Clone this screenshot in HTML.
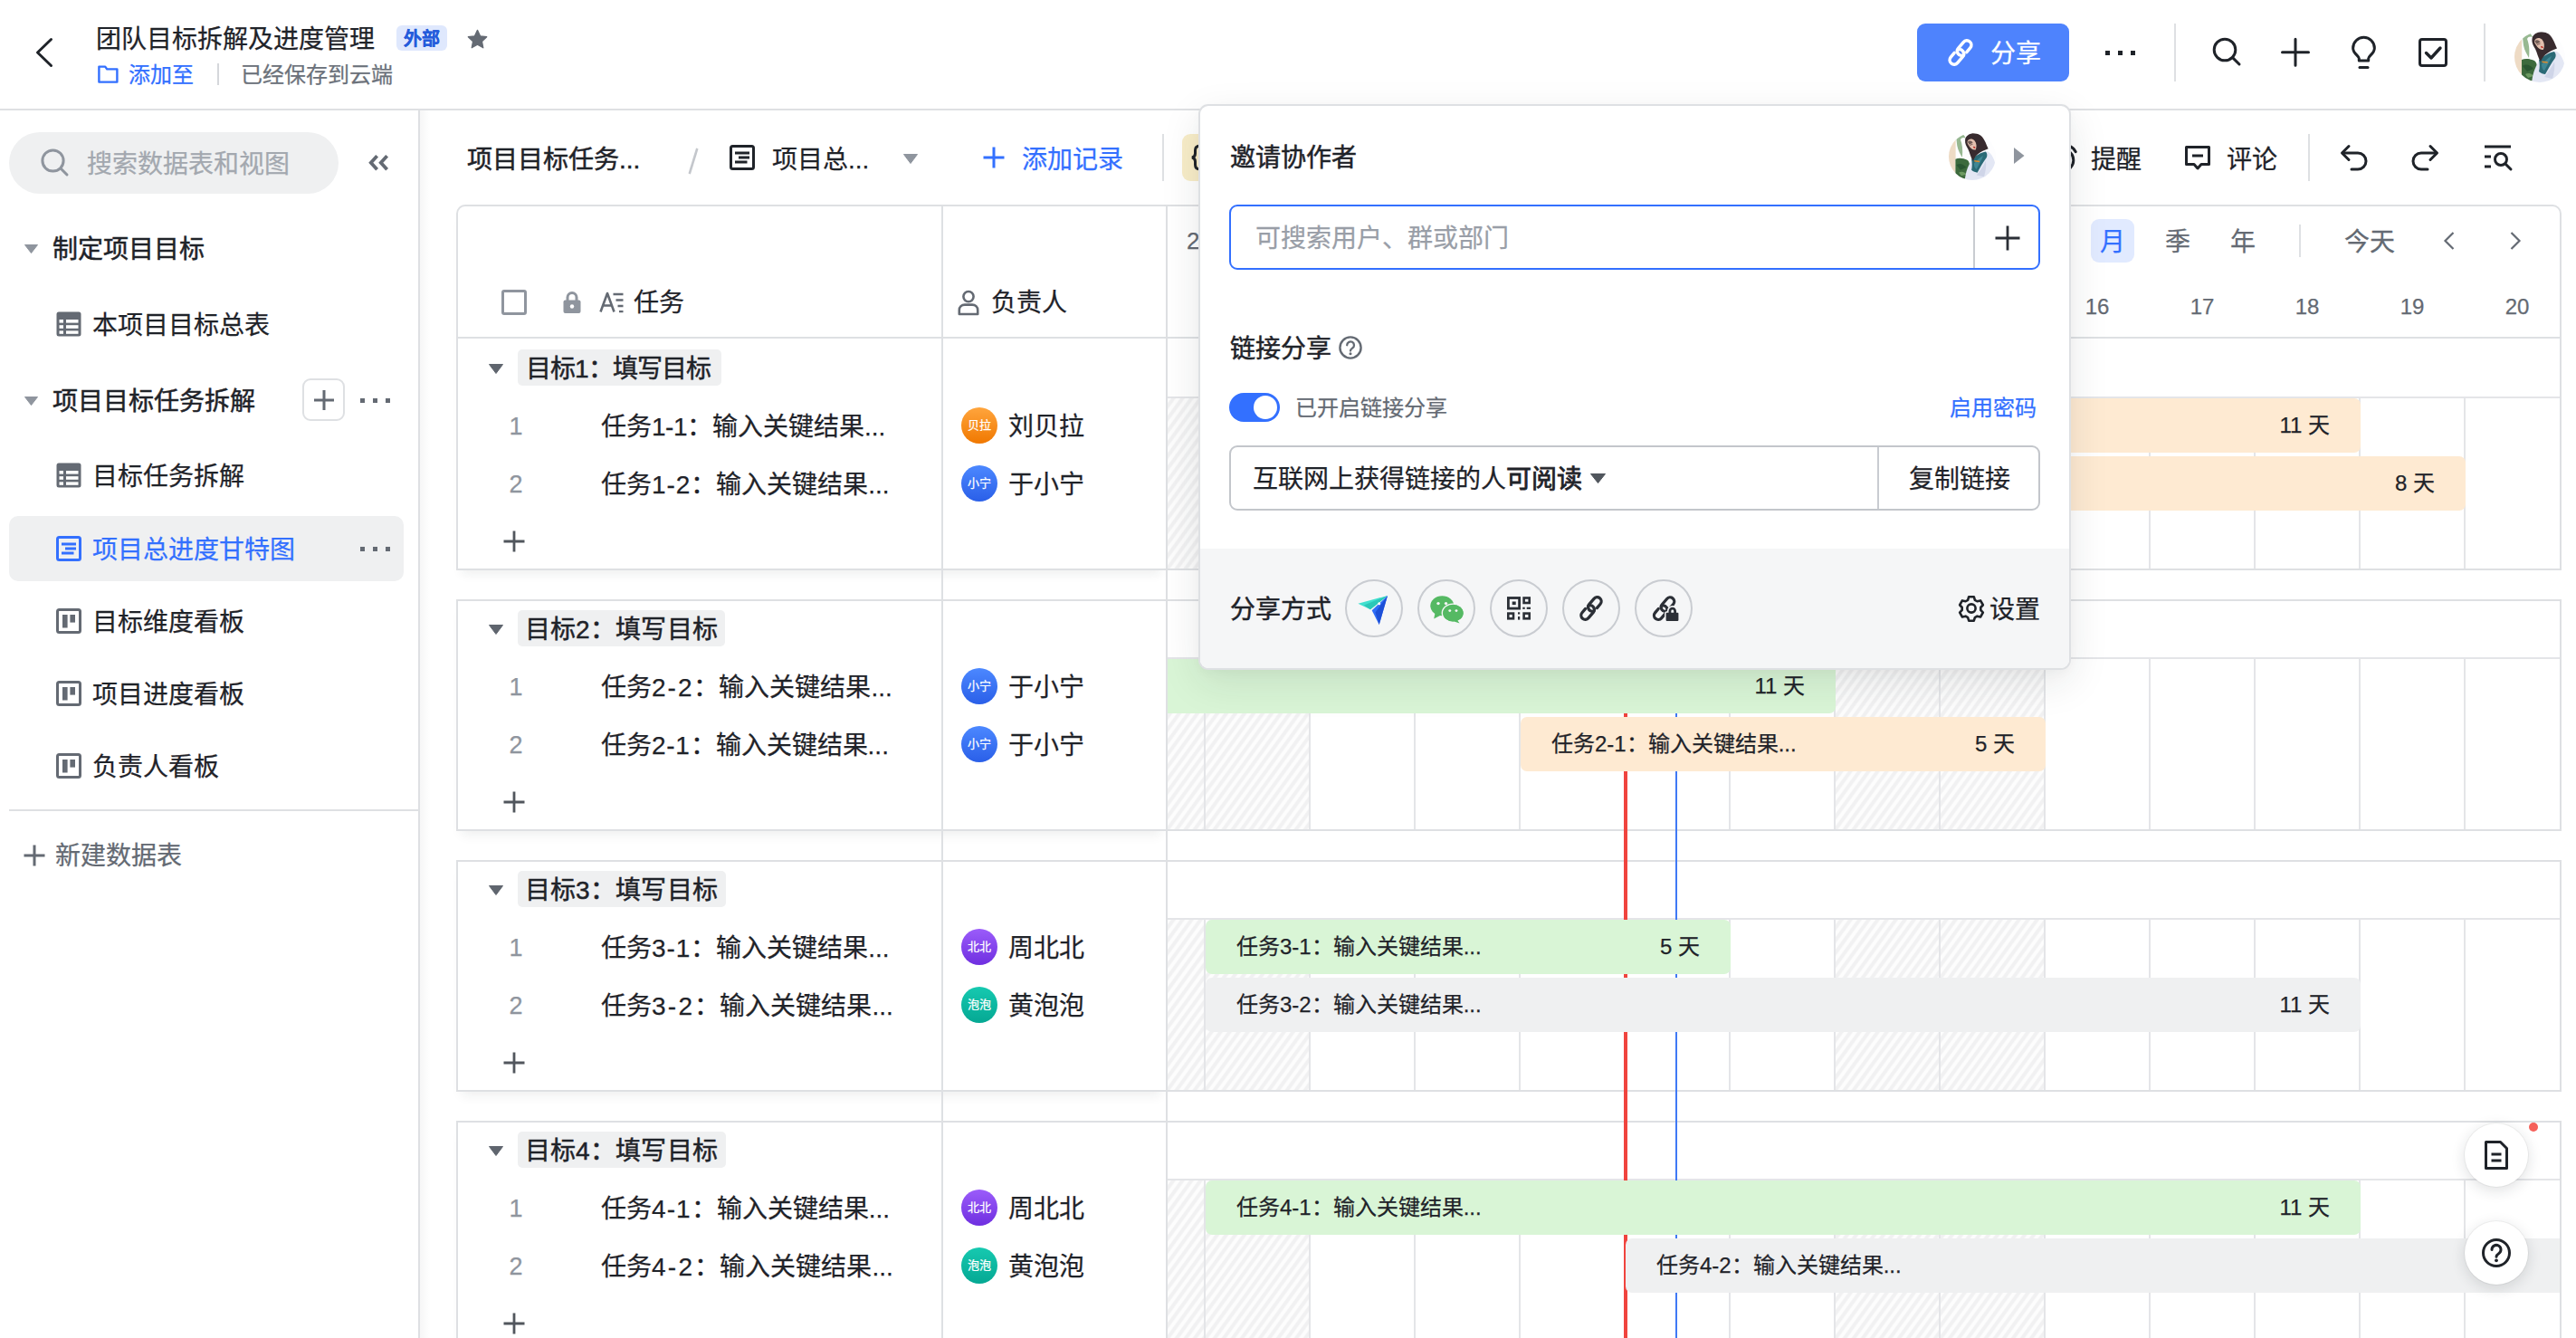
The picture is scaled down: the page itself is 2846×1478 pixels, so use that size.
<!DOCTYPE html>
<html lang="zh-CN"><head><meta charset="utf-8"><title>团队目标拆解及进度管理</title>
<style>
html,body{margin:0;padding:0;background:#fff;}
body{width:2846px;height:1478px;overflow:hidden;position:relative;font-family:"Liberation Sans",sans-serif;color:#1f2329;}
.t{position:absolute;white-space:nowrap;overflow:visible;-webkit-text-stroke:0.25px;}
.r{position:absolute;box-sizing:border-box;}
.clip{position:absolute;overflow:hidden;}
.hatch{background:repeating-linear-gradient(126deg,#fdfdfd 0px,#fdfdfd 2.4px,#f1f1f2 3.9px,#f1f1f2 6.4px,#fdfdfd 8.1px);}
</style></head><body>
<svg width="0" height="0" style="position:absolute"><defs>
<clipPath id="avc"><circle cx="28" cy="28" r="28"/></clipPath>
<filter id="avb" x="-10%" y="-10%" width="120%" height="120%"><feGaussianBlur stdDeviation="0.55"/></filter>
<symbol id="avatar" viewBox="0 0 56 56"><g clip-path="url(#avc)"><rect width="56" height="56" fill="#fdfdfe"/>
<g filter="url(#avb)">
<rect x="-2" y="-2" width="10.2" height="60" fill="#eedbc5"/>
<path d="M8.5 2 C12 -1 18 0 20 6 C18 5 15 5 14 8 C16 13 17 20 16 29 C14 25 11 21 10 15 C9.5 11 9 6 8.5 2 Z" fill="#7da676" opacity=".8"/>
<path d="M8 31 C12 29 18 30 22 32 C25 34 26 40 24 46 L22 55 L8 53 Z" fill="#3c6b3c"/>
<path d="M9 38 C13 35 18 37 21 41 L14 44 Z" fill="#2c5630"/>
<path d="M12 47 C15 45 19 46 21 49 L15 51 Z" fill="#6d9a62"/>
<path d="M52 40 L57 41 L57 47 L52 46 Z" fill="#4f8a45"/>
<path d="M19 57 C20 45 24 37 28 31 C33 25 41 21 47 22 C53 26 56 36 57 46 L57 58 Z" fill="#e3e7f4"/>
<path d="M33 50 C37 45 41 40 44 33 C45 38 44 45 42 52 Z" fill="#cfd5e8"/>
<path d="M27 31 C32 27 38 23 44 22 C46 24 46 27 45 29 C41 34 37 42 34 47 C32 47 29 46 27 44 C28 40 28 35 27 31 Z" fill="#2c6a76"/>
<path d="M30 36 C33 33 37 29 41 27 C39 32 36 38 33 43 C31 42 30 39 30 36 Z" fill="#3f8794"/>
<path d="M30.5 32.4 L36.8 33.2 L36.6 34.8 L30.4 34 Z" fill="#e08b2c"/>
<path d="M19.5 8 C20 1.5 29 -1.5 36 1.5 C42 4.5 44 12 47 18.5 C43 20 38 22 34 25.5 C31 28 30 31 29 33 C26 29 25 23 23 19 C21 15.5 19 12.5 19.5 8 Z" fill="#392c2e"/>
<path d="M22.2 10 C23.6 6.4 28 6.2 30.6 8.8 C33.2 12 33.6 16 32 19.8 C29 20.8 26 18.2 24 15 C23 13.4 21.7 12 22.2 10 Z" fill="#e3bfae"/>
<path d="M22.4 10.6 C24.5 8.2 27.4 9.2 28.6 11.6 L24.5 13.8 Z" fill="#4a3a3a" opacity=".75"/>
<path d="M25 14.5 L28.5 13.2" stroke="#5a4040" stroke-width=".8"/>
<ellipse cx="30.4" cy="17" rx="1.4" ry=".9" fill="#c02a22" transform="rotate(30 30.4 17)"/>
</g></g></symbol>
</defs></svg>
<div class="r" style="left:0px;top:120px;width:2846px;height:2px;background:#dee0e3;"></div>
<svg class="r" style="left:36px;top:38px;" width="26" height="40" viewBox="0 0 26 40" fill="none"><path d="M20.5 5.5 L5.5 20 L20.5 34.5" stroke="#1f2329" stroke-width="3" stroke-linecap="round" stroke-linejoin="round"/></svg>
<div class="t" style="left:106px;top:23.0px;line-height:42px;height:42px;font-size:28px;color:#1f2329;">团队目标拆解及进度管理</div>
<div class="r" style="left:438px;top:28px;width:56px;height:28px;background:#dfe8fd;border-radius:6px;"></div>
<div class="t" style="left:438px;top:28.5px;line-height:28px;height:28px;font-size:20px;color:#245bdb;font-weight:700;width:56px;text-align:center;">外部</div>
<svg class="r" style="left:515px;top:31px;" width="25" height="25" viewBox="0 0 24 24" fill="none"><path d="M12 2.2l2.95 6.3 6.85.85-5.05 4.75 1.3 6.8L12 17.55 5.95 20.9l1.3-6.8L2.2 9.35l6.85-.85z" fill="#646a73" stroke="#646a73" stroke-width="1.2" stroke-linejoin="round"/></svg>
<svg class="r" style="left:107px;top:70px;" width="26" height="24" viewBox="0 0 26 24" fill="none"><path d="M2.4 3.6 H9.2 L11.2 6.4 H22.4 V20.6 H2.4 Z" stroke="#3370ff" stroke-width="2.4" stroke-linejoin="round"/></svg>
<div class="t" style="left:142px;top:64.5px;line-height:36px;height:36px;font-size:24px;color:#3370ff;">添加至</div>
<div class="r" style="left:240px;top:70px;width:2px;height:24px;background:#d5d7db;"></div>
<div class="t" style="left:265.5px;top:64.5px;line-height:36px;height:36px;font-size:24px;color:#6b717a;">已经保存到云端</div>
<div class="r" style="left:2118px;top:26px;width:168px;height:64px;background:#4e83fd;border-radius:9px;"></div>
<svg class="r" style="left:2141.5px;top:33.6px" width="48" height="48" viewBox="-24 -24 48 48" fill="none"><g transform="translate(0,0) rotate(-49.6) scale(1.07)" stroke="#fff" stroke-width="3.27" stroke-linecap="round" fill="none"><path d="M 4.4 4.6 L 10.1 4.6 A 4.6 4.6 0 0 0 10.1 -4.6 L 1.8 -4.6 A 4.6 4.6 0 0 0 -0.5 3.98"/><path d="M 4.4 4.6 L 10.1 4.6 A 4.6 4.6 0 0 0 10.1 -4.6 L 1.8 -4.6 A 4.6 4.6 0 0 0 -0.5 3.98" transform="rotate(180)"/></g></svg>
<div class="t" style="left:2199px;top:38.5px;line-height:42px;height:42px;font-size:28px;color:#fff;">分享</div>
<div class="r" style="left:2326px;top:55.5px;width:5px;height:5.5px;background:#1f2329;"></div>
<div class="r" style="left:2340px;top:55.5px;width:5px;height:5.5px;background:#1f2329;"></div>
<div class="r" style="left:2354px;top:55.5px;width:5px;height:5.5px;background:#1f2329;"></div>
<div class="r" style="left:2402px;top:26px;width:2px;height:64px;background:#dee0e3;"></div>
<svg class="r" style="left:2442px;top:39px;" width="36" height="36" viewBox="0 0 36 36" fill="none"><circle cx="16" cy="16" r="11.8" stroke="#1f2329" stroke-width="3"/><path d="M24.6 24.6 L32 32" stroke="#1f2329" stroke-width="3" stroke-linecap="round"/></svg>
<svg class="r" style="left:2518px;top:40px;" width="36" height="36" viewBox="0 0 36 36" fill="none"><path d="M18 3.3 V32.2 M3.5 17.75 H32.5" stroke="#1f2329" stroke-width="3" stroke-linecap="round"/></svg>
<svg class="r" style="left:2594px;top:36px;" width="36" height="42" viewBox="0 0 36 42" fill="none"><path d="M12.3 31 V28.6 C12.3 25.6 5.65 23.2 5.65 17.15 A11.85 11.85 0 0 1 29.35 17.15 C29.35 23.2 22.7 25.6 22.7 28.6 V31 Z" stroke="#1f2329" stroke-width="3" stroke-linejoin="round"/><path d="M13 38.4 H22" stroke="#1f2329" stroke-width="3" stroke-linecap="round"/></svg>
<svg class="r" style="left:2670px;top:40px;" width="36" height="36" viewBox="0 0 36 36" fill="none"><rect x="3.5" y="3.5" width="29" height="29" rx="2.5" stroke="#1f2329" stroke-width="3"/><path d="M10.5 18.5 L16 24 L26 13" stroke="#1f2329" stroke-width="3.4" stroke-linecap="round" stroke-linejoin="round"/></svg>
<div class="r" style="left:2744px;top:26px;width:2px;height:64px;background:#dee0e3;"></div>
<svg class="r" style="left:2778px;top:35px" width="56" height="56"><use href="#avatar"/></svg>
<div class="r" style="left:462px;top:122px;width:2px;height:1356px;background:#dee0e3;"></div>
<div class="r" style="left:464px;top:122px;width:12px;height:1356px;background:linear-gradient(90deg,rgba(31,35,41,0.04),rgba(31,35,41,0));"></div>
<div class="r" style="left:10px;top:146px;width:364px;height:68px;background:#eff0f1;border-radius:34px;"></div>
<svg class="r" style="left:43px;top:162px;" width="36" height="36" viewBox="0 0 36 36" fill="none"><circle cx="15.5" cy="15.5" r="11.6" stroke="#8f959e" stroke-width="3"/><path d="M24 24 L31 31" stroke="#8f959e" stroke-width="3" stroke-linecap="round"/></svg>
<div class="t" style="left:96px;top:161.0px;line-height:42px;height:42px;font-size:28px;color:#a3a8af;">搜索数据表和视图</div>
<svg class="r" style="left:405px;top:168px;" width="28" height="24" viewBox="0 0 28 24" fill="none"><path d="M11.6 4.2 L4.8 11.7 L11.6 19.2 M22.6 4.2 L15.8 11.7 L22.6 19.2" stroke="#646a73" stroke-width="3.8" stroke-linejoin="miter" fill="none"/></svg>
<svg class="r" style="left:27px;top:270px;" width="15" height="10" viewBox="0 0 15 10" fill="none"><path d="M0.5 0.5 H14.5 L7.5 9.5 Z" fill="#8f959e" stroke="#8f959e" stroke-linejoin="round" stroke-width="1"/></svg>
<div class="t" style="left:58px;top:255.0px;line-height:42px;height:42px;font-size:28px;color:#1f2329;-webkit-text-stroke:0.5px;">制定项目目标</div>
<svg class="r" style="left:62px;top:344px;" width="28" height="28" viewBox="0 0 28 28" fill="none"><rect x="0.5" y="0.5" width="27" height="27" rx="2.5" fill="#646a73"/><g fill="#fff"><rect x="3.5" y="9" width="4.5" height="3.6"/><rect x="11" y="9" width="13.5" height="3.6"/><rect x="3.5" y="15.2" width="4.5" height="3.6"/><rect x="11" y="15.2" width="13.5" height="3.6"/><rect x="3.5" y="21.4" width="4.5" height="3.4"/><rect x="11" y="21.4" width="13.5" height="3.4"/></g></svg>
<div class="t" style="left:102px;top:339.0px;line-height:42px;height:42px;font-size:28px;color:#1f2329;">本项目目标总表</div>
<svg class="r" style="left:27px;top:438px;" width="15" height="10" viewBox="0 0 15 10" fill="none"><path d="M0.5 0.5 H14.5 L7.5 9.5 Z" fill="#8f959e" stroke="#8f959e" stroke-linejoin="round" stroke-width="1"/></svg>
<div class="t" style="left:58px;top:423.0px;line-height:42px;height:42px;font-size:28px;color:#1f2329;-webkit-text-stroke:0.5px;">项目目标任务拆解</div>
<div class="r" style="left:334px;top:418px;width:47px;height:47px;background:#fff;border:2px solid #dee0e3;border-radius:9px;"></div>
<svg class="r" style="left:345px;top:429px;" width="26" height="26" viewBox="0 0 26 26" fill="none"><path d="M13 2 V24 M2 13 H24" stroke="#646a73" stroke-width="3"/></svg>
<div class="r" style="left:398px;top:439.5px;width:5px;height:5px;background:#646a73;"></div>
<div class="r" style="left:412px;top:439.5px;width:5px;height:5px;background:#646a73;"></div>
<div class="r" style="left:426px;top:439.5px;width:5px;height:5px;background:#646a73;"></div>
<svg class="r" style="left:62px;top:511px;" width="28" height="28" viewBox="0 0 28 28" fill="none"><rect x="0.5" y="0.5" width="27" height="27" rx="2.5" fill="#646a73"/><g fill="#fff"><rect x="3.5" y="9" width="4.5" height="3.6"/><rect x="11" y="9" width="13.5" height="3.6"/><rect x="3.5" y="15.2" width="4.5" height="3.6"/><rect x="11" y="15.2" width="13.5" height="3.6"/><rect x="3.5" y="21.4" width="4.5" height="3.4"/><rect x="11" y="21.4" width="13.5" height="3.4"/></g></svg>
<div class="t" style="left:102px;top:506.0px;line-height:42px;height:42px;font-size:28px;color:#1f2329;">目标任务拆解</div>
<div class="r" style="left:10px;top:570px;width:436px;height:72px;background:#eff0f1;border-radius:10px;"></div>
<svg class="r" style="left:62px;top:592px;" width="28" height="28" viewBox="0 0 28 28" fill="none"><rect x="1.5" y="1.5" width="25" height="25" rx="2" stroke="#3370ff" stroke-width="3"/><path d="M6 9 H22 M10 14 H22 M6 19 H19.5" stroke="#3370ff" stroke-width="3"/></svg>
<div class="t" style="left:102px;top:587.0px;line-height:42px;height:42px;font-size:28px;color:#3370ff;">项目总进度甘特图</div>
<div class="r" style="left:398px;top:603.5px;width:5px;height:5px;background:#646a73;"></div>
<div class="r" style="left:412px;top:603.5px;width:5px;height:5px;background:#646a73;"></div>
<div class="r" style="left:426px;top:603.5px;width:5px;height:5px;background:#646a73;"></div>
<svg class="r" style="left:62px;top:672px;" width="28" height="28" viewBox="0 0 28 28" fill="none"><rect x="1.5" y="1.5" width="25" height="25" rx="2" stroke="#646a73" stroke-width="3"/><rect x="7" y="7" width="5.6" height="14.5" fill="#646a73"/><rect x="15.4" y="7" width="5.6" height="8.6" fill="#646a73"/></svg>
<div class="t" style="left:102px;top:667.0px;line-height:42px;height:42px;font-size:28px;color:#1f2329;">目标维度看板</div>
<svg class="r" style="left:62px;top:752px;" width="28" height="28" viewBox="0 0 28 28" fill="none"><rect x="1.5" y="1.5" width="25" height="25" rx="2" stroke="#646a73" stroke-width="3"/><rect x="7" y="7" width="5.6" height="14.5" fill="#646a73"/><rect x="15.4" y="7" width="5.6" height="8.6" fill="#646a73"/></svg>
<div class="t" style="left:102px;top:747.0px;line-height:42px;height:42px;font-size:28px;color:#1f2329;">项目进度看板</div>
<svg class="r" style="left:62px;top:832px;" width="28" height="28" viewBox="0 0 28 28" fill="none"><rect x="1.5" y="1.5" width="25" height="25" rx="2" stroke="#646a73" stroke-width="3"/><rect x="7" y="7" width="5.6" height="14.5" fill="#646a73"/><rect x="15.4" y="7" width="5.6" height="8.6" fill="#646a73"/></svg>
<div class="t" style="left:102px;top:827.0px;line-height:42px;height:42px;font-size:28px;color:#1f2329;">负责人看板</div>
<div class="r" style="left:10px;top:894px;width:452px;height:2px;background:#dee0e3;"></div>
<svg class="r" style="left:25px;top:932px;" width="26" height="26" viewBox="0 0 26 26" fill="none"><path d="M13 1.5 V24.5 M1.5 13 H24.5" stroke="#646a73" stroke-width="3"/></svg>
<div class="t" style="left:61px;top:925.0px;line-height:42px;height:42px;font-size:28px;color:#646a73;">新建数据表</div>
<div class="t" style="left:516px;top:155.5px;line-height:42px;height:42px;font-size:28px;color:#1f2329;-webkit-text-stroke:0.5px;">项目目标任务...</div>
<svg class="r" style="left:758px;top:162px;" width="16" height="32" viewBox="0 0 16 32" fill="none"><path d="M12.3 2 L3.7 30" stroke="#c4c7cc" stroke-width="2.6"/></svg>
<svg class="r" style="left:806px;top:160px;" width="28" height="28" viewBox="0 0 28 28" fill="none"><rect x="1.5" y="1.5" width="25" height="25" rx="2" stroke="#1f2329" stroke-width="3"/><path d="M6 9 H22 M10 14 H22 M6 19 H19.5" stroke="#1f2329" stroke-width="3"/></svg>
<div class="t" style="left:853px;top:155.5px;line-height:42px;height:42px;font-size:28px;color:#1f2329;">项目总...</div>
<svg class="r" style="left:998px;top:170px;" width="16" height="11" viewBox="0 0 16 11" fill="none"><path d="M0.5 0.5 H15.5 L8.0 10.5 Z" fill="#8f959e" stroke="#8f959e" stroke-linejoin="round" stroke-width="1"/></svg>
<svg class="r" style="left:1084px;top:160px;" width="28" height="28" viewBox="0 0 28 28" fill="none"><path d="M14 2.5 V25.5 M2.5 14 H25.5" stroke="#3370ff" stroke-width="3"/></svg>
<div class="t" style="left:1129px;top:155.5px;line-height:42px;height:42px;font-size:28px;color:#3370ff;">添加记录</div>
<div class="r" style="left:1284px;top:148px;width:2px;height:52px;background:#dee0e3;"></div>
<div class="r" style="left:1306px;top:148px;width:60px;height:52px;background:#f8edc8;border-radius:9px;"></div>
<svg class="r" style="left:1314px;top:158px;" width="20" height="32" viewBox="0 0 20 32" fill="none"><path d="M12 3 C8 3 6.5 5 6.5 8 V11.5 C6.5 14 5 15.5 3 16 C5 16.5 6.5 18 6.5 20.5 V24 C6.5 27 8 29 12 29" stroke="#1f2329" stroke-width="3" fill="none" stroke-linecap="round"/></svg>
<svg class="r" style="left:2262px;top:158px;" width="34" height="34" viewBox="0 0 34 34" fill="none"><circle cx="17" cy="19" r="11.8" stroke="#1f2329" stroke-width="3"/><path d="M23.5 3.2 C27 4.2 29.8 6.6 31.2 9.6" stroke="#1f2329" stroke-width="3" stroke-linecap="round"/></svg>
<div class="t" style="left:2310px;top:155.5px;line-height:42px;height:42px;font-size:28px;color:#1f2329;">提醒</div>
<svg class="r" style="left:2412px;top:159px;" width="32" height="32" viewBox="0 0 32 32" fill="none"><path d="M3.5 3.5 H28.5 V22.5 H20 L16 27 L12 22.5 H3.5 Z" stroke="#1f2329" stroke-width="3" stroke-linejoin="round"/><path d="M10 13 H22" stroke="#1f2329" stroke-width="3"/></svg>
<div class="t" style="left:2460px;top:155.5px;line-height:42px;height:42px;font-size:28px;color:#1f2329;">评论</div>
<div class="r" style="left:2550px;top:148px;width:2px;height:52px;background:#dee0e3;"></div>
<svg class="r" style="left:2584px;top:158px;" width="34" height="32" viewBox="0 0 34 32" fill="none"><path d="M11 3.5 L3.5 11 L11 18.5" stroke="#1f2329" stroke-width="3" stroke-linecap="round" stroke-linejoin="round"/><path d="M4.5 11 H21 A9 9 0 0 1 21 29 H14" stroke="#1f2329" stroke-width="3" stroke-linecap="round"/></svg>
<svg class="r" style="left:2662px;top:158px;" width="34" height="32" viewBox="0 0 34 32" fill="none"><path d="M23 3.5 L30.5 11 L23 18.5" stroke="#1f2329" stroke-width="3" stroke-linecap="round" stroke-linejoin="round"/><path d="M29.5 11 H13 A9 9 0 0 0 13 29 H20" stroke="#1f2329" stroke-width="3" stroke-linecap="round"/></svg>
<svg class="r" style="left:2743px;top:158px;" width="34" height="32" viewBox="0 0 34 32" fill="none"><path d="M2 4 H31 M2 15 H9 M2 26 H9" stroke="#1f2329" stroke-width="3"/><circle cx="20" cy="18" r="6.5" stroke="#1f2329" stroke-width="3"/><path d="M25 23 L31 29" stroke="#1f2329" stroke-width="3" stroke-linecap="round"/></svg>
<div class="r" style="left:504px;top:228px;width:784px;height:402px;background:#fff;box-shadow:0 10px 12px -6px rgba(31,35,41,0.075);border-radius:10px 0 0 0;"></div>
<div class="r" style="left:504px;top:662px;width:784px;height:256px;background:#fff;box-shadow:0 10px 12px -6px rgba(31,35,41,0.075);"></div>
<div class="r" style="left:504px;top:950px;width:784px;height:256px;background:#fff;box-shadow:0 10px 12px -6px rgba(31,35,41,0.075);"></div>
<div class="r" style="left:504px;top:1238px;width:784px;height:256px;background:#fff;box-shadow:0 10px 12px -6px rgba(31,35,41,0.075);"></div>
<div class="r" style="left:504px;top:226px;width:2326px;height:404px;background:transparent;border:2px solid #dee0e3;border-radius:10px 10px 0 0;"></div>
<div class="r" style="left:506px;top:372px;width:2322px;height:2px;background:#dee0e3;"></div>
<div class="r" style="left:504px;top:662px;width:2326px;height:256px;background:transparent;border:2px solid #dee0e3;"></div>
<div class="r" style="left:504px;top:950px;width:2326px;height:256px;background:transparent;border:2px solid #dee0e3;"></div>
<div class="r" style="left:504px;top:1238px;width:2326px;height:256px;background:transparent;border:2px solid #dee0e3;"></div>
<div class="r" style="left:1040px;top:228px;width:2px;height:1250px;background:#dee0e3;"></div>
<div class="r" style="left:1288px;top:228px;width:2px;height:1250px;background:#dee0e3;"></div>
<div class="r" style="left:554px;top:320px;width:28px;height:28px;background:#fff;border:3px solid #8f959e;border-radius:3px;"></div>
<svg class="r" style="left:621px;top:321px;" width="22" height="26" viewBox="0 0 22 26" fill="none"><path d="M6 11 V7.5 a5 5 0 0 1 10 0 V11" stroke="#8f959e" stroke-width="3" fill="none"/><rect x="1.5" y="10.5" width="19" height="14.5" rx="2" fill="#8f959e"/><circle cx="11" cy="17.5" r="2.2" fill="#fff"/></svg>
<svg class="r" style="left:661px;top:321px;" width="30" height="26" viewBox="0 0 30 26" fill="none"><path d="M2.5 23.5 L10 3 L17.5 23.5 M5 16.5 H15" stroke="#646a73" stroke-width="2.6" fill="none" stroke-linejoin="round"/><path d="M16.5 4 H27.5 M19.5 10.5 H27.5 M21.5 17 H27.5 M23 23.2 H27.5" stroke="#646a73" stroke-width="2.3"/></svg>
<div class="t" style="left:700px;top:314.0px;line-height:42px;height:42px;font-size:28px;color:#1f2329;">任务</div>
<svg class="r" style="left:1056px;top:319px;" width="28" height="30" viewBox="0 0 28 30" fill="none"><circle cx="14" cy="8.6" r="5.6" stroke="#646a73" stroke-width="2.6"/><path d="M3.8 28 V23.5 C3.8 20 6.5 17.6 10 17.6 H18 C21.5 17.6 24.2 20 24.2 23.5 V28 Z" stroke="#646a73" stroke-width="2.6" stroke-linejoin="round"/></svg>
<div class="t" style="left:1095px;top:314.0px;line-height:42px;height:42px;font-size:28px;color:#1f2329;">负责人</div>
<svg class="r" style="left:540px;top:402px;" width="16" height="11" viewBox="0 0 16 11" fill="none"><path d="M0.5 0.5 H15.5 L8.0 10.5 Z" fill="#5f656e" stroke="#5f656e" stroke-linejoin="round" stroke-width="1"/></svg>
<div class="r" style="left:572px;top:386px;width:225px;height:40px;background:#eff0f1;border-radius:5px;"></div>
<div class="t" style="left:580.5px;top:386.5px;line-height:42px;height:42px;font-size:28px;color:#1f2329;-webkit-text-stroke:0.5px;letter-spacing:-0.8px;">目标1：填写目标</div>
<div class="t" style="left:552px;top:451.0px;line-height:40px;height:40px;font-size:27px;color:#8f959e;width:36px;text-align:center;">1</div>
<div class="t" style="left:664px;top:450.5px;line-height:42px;height:42px;font-size:28px;color:#1f2329;">任务<span style="letter-spacing:-0.5px;">1-1</span>：输入关键结果...</div>
<div class="r" style="left:1062px;top:450px;width:40px;height:40px;background:linear-gradient(180deg,#ffa53d,#f07800);border-radius:50%;"></div>
<div class="t" style="left:1062px;top:460.0px;line-height:20px;height:20px;font-size:13px;color:#fff;width:40px;text-align:center;">贝拉</div>
<div class="t" style="left:1114px;top:450.5px;line-height:42px;height:42px;font-size:28px;color:#1f2329;">刘贝拉</div>
<div class="t" style="left:552px;top:515.0px;line-height:40px;height:40px;font-size:27px;color:#8f959e;width:36px;text-align:center;">2</div>
<div class="t" style="left:664px;top:514.5px;line-height:42px;height:42px;font-size:28px;color:#1f2329;">任务<span style="letter-spacing:0.9px;">1-2</span>：输入关键结果...</div>
<div class="r" style="left:1062px;top:514px;width:40px;height:40px;background:linear-gradient(180deg,#4c88ff,#2a5fe8);border-radius:50%;"></div>
<div class="t" style="left:1062px;top:524.0px;line-height:20px;height:20px;font-size:13px;color:#fff;width:40px;text-align:center;">小宁</div>
<div class="t" style="left:1114px;top:514.5px;line-height:42px;height:42px;font-size:28px;color:#1f2329;">于小宁</div>
<svg class="r" style="left:555px;top:585px;" width="26" height="26" viewBox="0 0 26 26" fill="none"><path d="M13 1.5 V24.5 M1.5 13 H24.5" stroke="#51565d" stroke-width="2.8"/></svg>
<svg class="r" style="left:540px;top:690px;" width="16" height="11" viewBox="0 0 16 11" fill="none"><path d="M0.5 0.5 H15.5 L8.0 10.5 Z" fill="#5f656e" stroke="#5f656e" stroke-linejoin="round" stroke-width="1"/></svg>
<div class="r" style="left:572px;top:674px;width:229px;height:40px;background:#eff0f1;border-radius:5px;"></div>
<div class="t" style="left:579.5px;top:674.5px;line-height:42px;height:42px;font-size:28px;color:#1f2329;-webkit-text-stroke:0.5px;letter-spacing:0.25px;">目标2：填写目标</div>
<div class="t" style="left:552px;top:739.0px;line-height:40px;height:40px;font-size:27px;color:#8f959e;width:36px;text-align:center;">1</div>
<div class="t" style="left:664px;top:738.5px;line-height:42px;height:42px;font-size:28px;color:#1f2329;">任务<span style="letter-spacing:2.0px;">2-2</span>：输入关键结果...</div>
<div class="r" style="left:1062px;top:738px;width:40px;height:40px;background:linear-gradient(180deg,#4c88ff,#2a5fe8);border-radius:50%;"></div>
<div class="t" style="left:1062px;top:748.0px;line-height:20px;height:20px;font-size:13px;color:#fff;width:40px;text-align:center;">小宁</div>
<div class="t" style="left:1114px;top:738.5px;line-height:42px;height:42px;font-size:28px;color:#1f2329;">于小宁</div>
<div class="t" style="left:552px;top:803.0px;line-height:40px;height:40px;font-size:27px;color:#8f959e;width:36px;text-align:center;">2</div>
<div class="t" style="left:664px;top:802.5px;line-height:42px;height:42px;font-size:28px;color:#1f2329;">任务<span style="letter-spacing:0.7px;">2-1</span>：输入关键结果...</div>
<div class="r" style="left:1062px;top:802px;width:40px;height:40px;background:linear-gradient(180deg,#4c88ff,#2a5fe8);border-radius:50%;"></div>
<div class="t" style="left:1062px;top:812.0px;line-height:20px;height:20px;font-size:13px;color:#fff;width:40px;text-align:center;">小宁</div>
<div class="t" style="left:1114px;top:802.5px;line-height:42px;height:42px;font-size:28px;color:#1f2329;">于小宁</div>
<svg class="r" style="left:555px;top:873px;" width="26" height="26" viewBox="0 0 26 26" fill="none"><path d="M13 1.5 V24.5 M1.5 13 H24.5" stroke="#51565d" stroke-width="2.8"/></svg>
<svg class="r" style="left:540px;top:978px;" width="16" height="11" viewBox="0 0 16 11" fill="none"><path d="M0.5 0.5 H15.5 L8.0 10.5 Z" fill="#5f656e" stroke="#5f656e" stroke-linejoin="round" stroke-width="1"/></svg>
<div class="r" style="left:572px;top:962px;width:230px;height:40px;background:#eff0f1;border-radius:5px;"></div>
<div class="t" style="left:579.5px;top:962.5px;line-height:42px;height:42px;font-size:28px;color:#1f2329;-webkit-text-stroke:0.5px;letter-spacing:0.25px;">目标3：填写目标</div>
<div class="t" style="left:552px;top:1027.0px;line-height:40px;height:40px;font-size:27px;color:#8f959e;width:36px;text-align:center;">1</div>
<div class="t" style="left:664px;top:1026.5px;line-height:42px;height:42px;font-size:28px;color:#1f2329;">任务<span style="letter-spacing:0.9px;">3-1</span>：输入关键结果...</div>
<div class="r" style="left:1062px;top:1026px;width:40px;height:40px;background:linear-gradient(180deg,#9b5cfa,#6f2fe0);border-radius:50%;"></div>
<div class="t" style="left:1062px;top:1036.0px;line-height:20px;height:20px;font-size:13px;color:#fff;width:40px;text-align:center;">北北</div>
<div class="t" style="left:1114px;top:1026.5px;line-height:42px;height:42px;font-size:28px;color:#1f2329;">周北北</div>
<div class="t" style="left:552px;top:1091.0px;line-height:40px;height:40px;font-size:27px;color:#8f959e;width:36px;text-align:center;">2</div>
<div class="t" style="left:664px;top:1090.5px;line-height:42px;height:42px;font-size:28px;color:#1f2329;">任务<span style="letter-spacing:2.3px;">3-2</span>：输入关键结果...</div>
<div class="r" style="left:1062px;top:1090px;width:40px;height:40px;background:linear-gradient(180deg,#16c9b0,#05a893);border-radius:50%;"></div>
<div class="t" style="left:1062px;top:1100.0px;line-height:20px;height:20px;font-size:13px;color:#fff;width:40px;text-align:center;">泡泡</div>
<div class="t" style="left:1114px;top:1090.5px;line-height:42px;height:42px;font-size:28px;color:#1f2329;">黄泡泡</div>
<svg class="r" style="left:555px;top:1161px;" width="26" height="26" viewBox="0 0 26 26" fill="none"><path d="M13 1.5 V24.5 M1.5 13 H24.5" stroke="#51565d" stroke-width="2.8"/></svg>
<svg class="r" style="left:540px;top:1266px;" width="16" height="11" viewBox="0 0 16 11" fill="none"><path d="M0.5 0.5 H15.5 L8.0 10.5 Z" fill="#5f656e" stroke="#5f656e" stroke-linejoin="round" stroke-width="1"/></svg>
<div class="r" style="left:572px;top:1250px;width:230px;height:40px;background:#eff0f1;border-radius:5px;"></div>
<div class="t" style="left:579.5px;top:1250.5px;line-height:42px;height:42px;font-size:28px;color:#1f2329;-webkit-text-stroke:0.5px;letter-spacing:0.25px;">目标4：填写目标</div>
<div class="t" style="left:552px;top:1315.0px;line-height:40px;height:40px;font-size:27px;color:#8f959e;width:36px;text-align:center;">1</div>
<div class="t" style="left:664px;top:1314.5px;line-height:42px;height:42px;font-size:28px;color:#1f2329;">任务<span style="letter-spacing:1.1px;">4-1</span>：输入关键结果...</div>
<div class="r" style="left:1062px;top:1314px;width:40px;height:40px;background:linear-gradient(180deg,#9b5cfa,#6f2fe0);border-radius:50%;"></div>
<div class="t" style="left:1062px;top:1324.0px;line-height:20px;height:20px;font-size:13px;color:#fff;width:40px;text-align:center;">北北</div>
<div class="t" style="left:1114px;top:1314.5px;line-height:42px;height:42px;font-size:28px;color:#1f2329;">周北北</div>
<div class="t" style="left:552px;top:1379.0px;line-height:40px;height:40px;font-size:27px;color:#8f959e;width:36px;text-align:center;">2</div>
<div class="t" style="left:664px;top:1378.5px;line-height:42px;height:42px;font-size:28px;color:#1f2329;">任务<span style="letter-spacing:2.3px;">4-2</span>：输入关键结果...</div>
<div class="r" style="left:1062px;top:1378px;width:40px;height:40px;background:linear-gradient(180deg,#16c9b0,#05a893);border-radius:50%;"></div>
<div class="t" style="left:1062px;top:1388.0px;line-height:20px;height:20px;font-size:13px;color:#fff;width:40px;text-align:center;">泡泡</div>
<div class="t" style="left:1114px;top:1378.5px;line-height:42px;height:42px;font-size:28px;color:#1f2329;">黄泡泡</div>
<svg class="r" style="left:555px;top:1449px;" width="26" height="26" viewBox="0 0 26 26" fill="none"><path d="M13 1.5 V24.5 M1.5 13 H24.5" stroke="#51565d" stroke-width="2.8"/></svg>
<div class="t" style="left:1311px;top:247.0px;line-height:39px;height:39px;font-size:26px;color:#646a73;">2021年11月</div>
<div class="r" style="left:2310px;top:242px;width:48px;height:48px;background:#e1eaff;border-radius:9px;"></div>
<div class="t" style="left:2310px;top:247.0px;line-height:42px;height:42px;font-size:28px;color:#3370ff;width:48px;text-align:center;">月</div>
<div class="t" style="left:2382px;top:247.0px;line-height:42px;height:42px;font-size:28px;color:#646a73;width:48px;text-align:center;">季</div>
<div class="t" style="left:2454px;top:247.0px;line-height:42px;height:42px;font-size:28px;color:#646a73;width:48px;text-align:center;">年</div>
<div class="r" style="left:2540px;top:248px;width:2px;height:36px;background:#dee0e3;"></div>
<div class="t" style="left:2590px;top:247.0px;line-height:42px;height:42px;font-size:28px;color:#646a73;">今天</div>
<svg class="r" style="left:2696px;top:254px;" width="20" height="24" viewBox="0 0 20 24" fill="none"><path d="M14.5 3 L5.5 12 L14.5 21" stroke="#646a73" stroke-width="2.2" fill="none"/></svg>
<svg class="r" style="left:2769px;top:254px;" width="20" height="24" viewBox="0 0 20 24" fill="none"><path d="M5.5 3 L14.5 12 L5.5 21" stroke="#646a73" stroke-width="2.2" fill="none"/></svg>
<div class="t" style="left:1349px;top:320.5px;line-height:36px;height:36px;font-size:24px;color:#646a73;width:80px;text-align:center;">8</div>
<div class="t" style="left:1465px;top:320.5px;line-height:36px;height:36px;font-size:24px;color:#646a73;width:80px;text-align:center;">9</div>
<div class="t" style="left:1581px;top:320.5px;line-height:36px;height:36px;font-size:24px;color:#646a73;width:80px;text-align:center;">10</div>
<div class="t" style="left:1697px;top:320.5px;line-height:36px;height:36px;font-size:24px;color:#646a73;width:80px;text-align:center;">11</div>
<div class="t" style="left:1813px;top:320.5px;line-height:36px;height:36px;font-size:24px;color:#646a73;width:80px;text-align:center;">12</div>
<div class="t" style="left:1929px;top:320.5px;line-height:36px;height:36px;font-size:24px;color:#646a73;width:80px;text-align:center;">13</div>
<div class="t" style="left:2045px;top:320.5px;line-height:36px;height:36px;font-size:24px;color:#646a73;width:80px;text-align:center;">14</div>
<div class="t" style="left:2161px;top:320.5px;line-height:36px;height:36px;font-size:24px;color:#646a73;width:80px;text-align:center;">15</div>
<div class="t" style="left:2277px;top:320.5px;line-height:36px;height:36px;font-size:24px;color:#646a73;width:80px;text-align:center;">16</div>
<div class="t" style="left:2393px;top:320.5px;line-height:36px;height:36px;font-size:24px;color:#646a73;width:80px;text-align:center;">17</div>
<div class="t" style="left:2509px;top:320.5px;line-height:36px;height:36px;font-size:24px;color:#646a73;width:80px;text-align:center;">18</div>
<div class="t" style="left:2625px;top:320.5px;line-height:36px;height:36px;font-size:24px;color:#646a73;width:80px;text-align:center;">19</div>
<div class="t" style="left:2741px;top:320.5px;line-height:36px;height:36px;font-size:24px;color:#646a73;width:80px;text-align:center;">20</div>
<div class="clip" style="left:1290px;top:228px;width:1538px;height:1250px;">
<div class="r" style="left:0px;top:210px;width:1538px;height:2px;background:#e4e5e8;"></div>
<div class="r hatch" style="left:0px;top:212px;width:40px;height:188px;"></div>
<div class="r hatch" style="left:42px;top:212px;width:114px;height:188px;"></div>
<div class="r hatch" style="left:738px;top:212px;width:114px;height:188px;"></div>
<div class="r hatch" style="left:854px;top:212px;width:114px;height:188px;"></div>
<div class="r" style="left:40px;top:212px;width:2px;height:188px;background:#e4e5e8;"></div>
<div class="r" style="left:156px;top:212px;width:2px;height:188px;background:#e4e5e8;"></div>
<div class="r" style="left:272px;top:212px;width:2px;height:188px;background:#e4e5e8;"></div>
<div class="r" style="left:388px;top:212px;width:2px;height:188px;background:#e4e5e8;"></div>
<div class="r" style="left:504px;top:212px;width:2px;height:188px;background:#e4e5e8;"></div>
<div class="r" style="left:620px;top:212px;width:2px;height:188px;background:#e4e5e8;"></div>
<div class="r" style="left:736px;top:212px;width:2px;height:188px;background:#e4e5e8;"></div>
<div class="r" style="left:852px;top:212px;width:2px;height:188px;background:#e4e5e8;"></div>
<div class="r" style="left:968px;top:212px;width:2px;height:188px;background:#e4e5e8;"></div>
<div class="r" style="left:1084px;top:212px;width:2px;height:188px;background:#e4e5e8;"></div>
<div class="r" style="left:1200px;top:212px;width:2px;height:188px;background:#e4e5e8;"></div>
<div class="r" style="left:1316px;top:212px;width:2px;height:188px;background:#e4e5e8;"></div>
<div class="r" style="left:1432px;top:212px;width:2px;height:188px;background:#e4e5e8;"></div>
<div class="r" style="left:0px;top:498px;width:1538px;height:2px;background:#e4e5e8;"></div>
<div class="r hatch" style="left:0px;top:500px;width:40px;height:188px;"></div>
<div class="r hatch" style="left:42px;top:500px;width:114px;height:188px;"></div>
<div class="r hatch" style="left:738px;top:500px;width:114px;height:188px;"></div>
<div class="r hatch" style="left:854px;top:500px;width:114px;height:188px;"></div>
<div class="r" style="left:40px;top:500px;width:2px;height:188px;background:#e4e5e8;"></div>
<div class="r" style="left:156px;top:500px;width:2px;height:188px;background:#e4e5e8;"></div>
<div class="r" style="left:272px;top:500px;width:2px;height:188px;background:#e4e5e8;"></div>
<div class="r" style="left:388px;top:500px;width:2px;height:188px;background:#e4e5e8;"></div>
<div class="r" style="left:504px;top:500px;width:2px;height:188px;background:#e4e5e8;"></div>
<div class="r" style="left:620px;top:500px;width:2px;height:188px;background:#e4e5e8;"></div>
<div class="r" style="left:736px;top:500px;width:2px;height:188px;background:#e4e5e8;"></div>
<div class="r" style="left:852px;top:500px;width:2px;height:188px;background:#e4e5e8;"></div>
<div class="r" style="left:968px;top:500px;width:2px;height:188px;background:#e4e5e8;"></div>
<div class="r" style="left:1084px;top:500px;width:2px;height:188px;background:#e4e5e8;"></div>
<div class="r" style="left:1200px;top:500px;width:2px;height:188px;background:#e4e5e8;"></div>
<div class="r" style="left:1316px;top:500px;width:2px;height:188px;background:#e4e5e8;"></div>
<div class="r" style="left:1432px;top:500px;width:2px;height:188px;background:#e4e5e8;"></div>
<div class="r" style="left:0px;top:786px;width:1538px;height:2px;background:#e4e5e8;"></div>
<div class="r hatch" style="left:0px;top:788px;width:40px;height:188px;"></div>
<div class="r hatch" style="left:42px;top:788px;width:114px;height:188px;"></div>
<div class="r hatch" style="left:738px;top:788px;width:114px;height:188px;"></div>
<div class="r hatch" style="left:854px;top:788px;width:114px;height:188px;"></div>
<div class="r" style="left:40px;top:788px;width:2px;height:188px;background:#e4e5e8;"></div>
<div class="r" style="left:156px;top:788px;width:2px;height:188px;background:#e4e5e8;"></div>
<div class="r" style="left:272px;top:788px;width:2px;height:188px;background:#e4e5e8;"></div>
<div class="r" style="left:388px;top:788px;width:2px;height:188px;background:#e4e5e8;"></div>
<div class="r" style="left:504px;top:788px;width:2px;height:188px;background:#e4e5e8;"></div>
<div class="r" style="left:620px;top:788px;width:2px;height:188px;background:#e4e5e8;"></div>
<div class="r" style="left:736px;top:788px;width:2px;height:188px;background:#e4e5e8;"></div>
<div class="r" style="left:852px;top:788px;width:2px;height:188px;background:#e4e5e8;"></div>
<div class="r" style="left:968px;top:788px;width:2px;height:188px;background:#e4e5e8;"></div>
<div class="r" style="left:1084px;top:788px;width:2px;height:188px;background:#e4e5e8;"></div>
<div class="r" style="left:1200px;top:788px;width:2px;height:188px;background:#e4e5e8;"></div>
<div class="r" style="left:1316px;top:788px;width:2px;height:188px;background:#e4e5e8;"></div>
<div class="r" style="left:1432px;top:788px;width:2px;height:188px;background:#e4e5e8;"></div>
<div class="r" style="left:0px;top:1074px;width:1538px;height:2px;background:#e4e5e8;"></div>
<div class="r hatch" style="left:0px;top:1076px;width:40px;height:188px;"></div>
<div class="r hatch" style="left:42px;top:1076px;width:114px;height:188px;"></div>
<div class="r hatch" style="left:738px;top:1076px;width:114px;height:188px;"></div>
<div class="r hatch" style="left:854px;top:1076px;width:114px;height:188px;"></div>
<div class="r" style="left:40px;top:1076px;width:2px;height:188px;background:#e4e5e8;"></div>
<div class="r" style="left:156px;top:1076px;width:2px;height:188px;background:#e4e5e8;"></div>
<div class="r" style="left:272px;top:1076px;width:2px;height:188px;background:#e4e5e8;"></div>
<div class="r" style="left:388px;top:1076px;width:2px;height:188px;background:#e4e5e8;"></div>
<div class="r" style="left:504px;top:1076px;width:2px;height:188px;background:#e4e5e8;"></div>
<div class="r" style="left:620px;top:1076px;width:2px;height:188px;background:#e4e5e8;"></div>
<div class="r" style="left:736px;top:1076px;width:2px;height:188px;background:#e4e5e8;"></div>
<div class="r" style="left:852px;top:1076px;width:2px;height:188px;background:#e4e5e8;"></div>
<div class="r" style="left:968px;top:1076px;width:2px;height:188px;background:#e4e5e8;"></div>
<div class="r" style="left:1084px;top:1076px;width:2px;height:188px;background:#e4e5e8;"></div>
<div class="r" style="left:1200px;top:1076px;width:2px;height:188px;background:#e4e5e8;"></div>
<div class="r" style="left:1316px;top:1076px;width:2px;height:188px;background:#e4e5e8;"></div>
<div class="r" style="left:1432px;top:1076px;width:2px;height:188px;background:#e4e5e8;"></div>
<div class="r" style="left:504px;top:146px;width:4px;height:1110px;background:#f0443e;"></div>
<div class="r" style="left:561px;top:146px;width:2px;height:1110px;background:#3f79f5;"></div>
<div class="r" style="left:42px;top:212px;width:1276px;height:60px;background:#feead2;border-radius:7px;"></div>
<div class="t" style="left:76px;top:224px;line-height:36px;font-size:24px;color:#1f2329;">任务1-1：输入关键结果...</div>
<div class="t" style="left:1164px;width:120px;text-align:right;top:224px;line-height:36px;font-size:24px;color:#1f2329;">11 天</div>
<div class="r" style="left:506px;top:276px;width:928px;height:60px;background:#feead2;border-radius:7px;"></div>
<div class="t" style="left:540px;top:288px;line-height:36px;font-size:24px;color:#1f2329;">任务1-2：输入关键结果...</div>
<div class="t" style="left:1280px;width:120px;text-align:right;top:288px;line-height:36px;font-size:24px;color:#1f2329;">8 天</div>
<div class="r" style="left:-538px;top:500px;width:1276px;height:60px;background:#d9f5d6;border-radius:7px;"></div>
<div class="t" style="left:-504px;top:512px;line-height:36px;font-size:24px;color:#1f2329;">任务2-2：输入关键结果...</div>
<div class="t" style="left:584px;width:120px;text-align:right;top:512px;line-height:36px;font-size:24px;color:#1f2329;">11 天</div>
<div class="r" style="left:390px;top:564px;width:580px;height:60px;background:#feead2;border-radius:7px;"></div>
<div class="t" style="left:424px;top:576px;line-height:36px;font-size:24px;color:#1f2329;">任务2-1：输入关键结果...</div>
<div class="t" style="left:816px;width:120px;text-align:right;top:576px;line-height:36px;font-size:24px;color:#1f2329;">5 天</div>
<div class="r" style="left:42px;top:788px;width:580px;height:60px;background:#d9f5d6;border-radius:7px;"></div>
<div class="t" style="left:76px;top:800px;line-height:36px;font-size:24px;color:#1f2329;">任务3-1：输入关键结果...</div>
<div class="t" style="left:468px;width:120px;text-align:right;top:800px;line-height:36px;font-size:24px;color:#1f2329;">5 天</div>
<div class="r" style="left:42px;top:852px;width:1276px;height:60px;background:#eff0f1;border-radius:7px;"></div>
<div class="t" style="left:76px;top:864px;line-height:36px;font-size:24px;color:#1f2329;">任务3-2：输入关键结果...</div>
<div class="t" style="left:1164px;width:120px;text-align:right;top:864px;line-height:36px;font-size:24px;color:#1f2329;">11 天</div>
<div class="r" style="left:42px;top:1076px;width:1276px;height:60px;background:#d9f5d6;border-radius:7px;"></div>
<div class="t" style="left:76px;top:1088px;line-height:36px;font-size:24px;color:#1f2329;">任务4-1：输入关键结果...</div>
<div class="t" style="left:1164px;width:120px;text-align:right;top:1088px;line-height:36px;font-size:24px;color:#1f2329;">11 天</div>
<div class="r" style="left:506px;top:1140px;width:1276px;height:60px;background:#eff0f1;border-radius:7px;"></div>
<div class="t" style="left:540px;top:1152px;line-height:36px;font-size:24px;color:#1f2329;">任务4-2：输入关键结果...</div>
<div class="t" style="left:1628px;width:120px;text-align:right;top:1152px;line-height:36px;font-size:24px;color:#1f2329;">11 天</div>
</div>
<div class="r" style="left:2723px;top:1241px;width:70px;height:70px;background:#fff;border-radius:50%;box-shadow:0 4px 16px rgba(31,35,41,0.14),0 0 0 1px rgba(31,35,41,0.05);"></div>
<div class="r" style="left:2723px;top:1349px;width:70px;height:70px;background:#fff;border-radius:50%;box-shadow:0 4px 16px rgba(31,35,41,0.14),0 0 0 1px rgba(31,35,41,0.05);"></div>
<svg class="r" style="left:2742px;top:1258px;" width="32" height="36" viewBox="0 0 32 36" fill="none"><path d="M4.5 3.5 H20.5 L27.5 10.5 V32.5 H4.5 Z" stroke="#1f2329" stroke-width="3" stroke-linejoin="round"/><path d="M10.5 17 H21.5 M10.5 24 H21.5" stroke="#1f2329" stroke-width="3"/></svg>
<svg class="r" style="left:2740px;top:1366px;" width="36" height="36" viewBox="0 0 36 36" fill="none"><circle cx="18" cy="18" r="14.5" stroke="#1f2329" stroke-width="3"/><path d="M13 14.5 a5 5 0 1 1 7.6 4.2 c-1.6 1-2.6 1.8-2.6 3.6" stroke="#1f2329" stroke-width="3" fill="none" stroke-linecap="round"/><circle cx="18" cy="26.3" r="1.9" fill="#1f2329"/></svg>
<div class="r" style="left:2794px;top:1240px;width:10px;height:10px;background:#f5605a;border-radius:50%;"></div>
<div class="r" style="left:1324px;top:115px;width:964px;height:625px;background:#fff;border:2px solid #dee0e3;border-radius:11px;box-shadow:0 14px 44px rgba(31,35,41,0.10),0 4px 12px rgba(31,35,41,0.025);overflow:hidden;">
<div class="r" style="left:0;top:489px;width:964px;height:134px;background:#f5f6f7;"></div>
</div>
<div class="t" style="left:1359px;top:153.5px;line-height:42px;height:42px;font-size:28px;color:#1f2329;-webkit-text-stroke:0.5px;">邀请协作者</div>
<svg class="r" style="left:2153px;top:147px" width="52" height="52"><use href="#avatar"/></svg>
<svg class="r" style="left:2224px;top:162px;" width="14" height="20" viewBox="0 0 14 20" fill="none"><path d="M1 1 L12.5 10 L1 19 Z" fill="#8f959e"/></svg>
<div class="r" style="left:1358px;top:226px;width:896px;height:72px;background:#fff;border:2.5px solid #3370ff;border-radius:9px;"></div>
<div class="r" style="left:2180px;top:228px;width:2px;height:68px;background:#c9ccd1;"></div>
<svg class="r" style="left:2203px;top:248px;" width="30" height="30" viewBox="0 0 30 30" fill="none"><path d="M15 1.5 V28.5 M1.5 15 H28.5" stroke="#2b2f36" stroke-width="2.8"/></svg>
<div class="t" style="left:1387px;top:243.0px;line-height:42px;height:42px;font-size:28px;color:#999ea7;">可搜索用户、群或部门</div>
<div class="t" style="left:1359px;top:365.0px;line-height:42px;height:42px;font-size:28px;color:#1f2329;-webkit-text-stroke:0.5px;">链接分享</div>
<svg class="r" style="left:1478px;top:370px;" width="28" height="28" viewBox="0 0 28 28" fill="none"><circle cx="14" cy="14" r="11.6" stroke="#646a73" stroke-width="2.4"/><path d="M10.2 11.3 a3.9 3.9 0 1 1 5.9 3.3 c-1.4 .9-2.1 1.5-2.1 3" stroke="#646a73" stroke-width="2.3" fill="none" stroke-linecap="round"/><circle cx="14" cy="20.8" r="1.5" fill="#646a73"/></svg>
<div class="r" style="left:1358px;top:434px;width:56px;height:32px;background:#3370ff;border-radius:16px;"></div>
<div class="r" style="left:1385px;top:437px;width:26px;height:26px;background:#fff;border-radius:50%;"></div>
<div class="t" style="left:1431px;top:433.0px;line-height:36px;height:36px;font-size:24px;color:#646a73;">已开启链接分享</div>
<div class="t" style="left:2154px;top:433.0px;line-height:36px;height:36px;font-size:24px;color:#3370ff;">启用密码</div>
<div class="r" style="left:1358px;top:492px;width:896px;height:72px;background:#fff;border:2px solid #c3c6cb;border-radius:9px;"></div>
<div class="r" style="left:2074px;top:494px;width:2px;height:68px;background:#c9ccd1;"></div>
<div class="t" style="left:1384px;top:508.5px;line-height:42px;height:42px;font-size:28px;color:#1f2329;">互联网上获得链接的人<span style="-webkit-text-stroke:0.8px;">可阅读</span></div>
<svg class="r" style="left:1757px;top:523px;" width="17" height="11" viewBox="0 0 17 11" fill="none"><path d="M0.5 0.5 H16.5 L8.5 10.5 Z" fill="#51565d" stroke="#51565d" stroke-linejoin="round" stroke-width="1"/></svg>
<div class="t" style="left:2076px;top:508.5px;line-height:42px;height:42px;font-size:28px;color:#1f2329;width:178px;text-align:center;">复制链接</div>
<div class="t" style="left:1359px;top:653.0px;line-height:42px;height:42px;font-size:28px;color:#1f2329;-webkit-text-stroke:0.5px;">分享方式</div>
<div class="r" style="left:1486px;top:640px;width:64px;height:64px;background:#f5f6f7;border:2px solid #c9ccd1;border-radius:50%;"></div>
<div class="r" style="left:1566px;top:640px;width:64px;height:64px;background:#f5f6f7;border:2px solid #c9ccd1;border-radius:50%;"></div>
<div class="r" style="left:1646px;top:640px;width:64px;height:64px;background:#f5f6f7;border:2px solid #c9ccd1;border-radius:50%;"></div>
<div class="r" style="left:1726px;top:640px;width:64px;height:64px;background:#f5f6f7;border:2px solid #c9ccd1;border-radius:50%;"></div>
<div class="r" style="left:1806px;top:640px;width:64px;height:64px;background:#f5f6f7;border:2px solid #c9ccd1;border-radius:50%;"></div>
<svg class="r" style="left:1498px;top:655px;" width="40" height="38" viewBox="0 0 40 38" fill="none"><path d="M2.4 11.7 L35 3 L16 18.3 Z" fill="#41e0cf"/><path d="M9 13.5 L35 3 L16 18.3 Z" fill="#2bc7b8"/><path d="M35 3 L25.7 35 L17.7 19.3 Z" fill="#2f6df6"/><path d="M35 3 L25.7 35 L21.5 21.5 Z" fill="#1d4fd7"/><circle cx="25.7" cy="11.7" r="1.5" fill="#fff"/></svg>
<svg class="r" style="left:1579.5px;top:658px;" width="38" height="31" viewBox="0 0 38 31" fill="none"><g fill="#55b963"><ellipse cx="13.3" cy="11.3" rx="13" ry="11"/><path d="M5.5 19 L4.2 25.6 L11.5 21.8 Z"/><ellipse cx="25.4" cy="19.2" rx="12" ry="10" stroke="#f5f6f7" stroke-width="1.6"/><ellipse cx="25.4" cy="19.2" rx="11.2" ry="9.4"/><path d="M30 27 L32.6 30.6 L26.5 28.4 Z"/></g><g fill="#f5f6f7"><circle cx="9" cy="8.6" r="1.7"/><circle cx="17.5" cy="8.6" r="1.7"/><circle cx="21.8" cy="16.6" r="1.45"/><circle cx="29" cy="16.6" r="1.45"/></g></svg>
<svg class="r" style="left:1665px;top:659px;" width="26" height="26" viewBox="0 0 26 26" fill="none"><g stroke="#2b2f36" fill="none"><rect x="1.4" y="1.5" width="12.2" height="11.6" stroke-width="2.8"/><rect x="18.6" y="1.5" width="6.1" height="5.5" stroke-width="2.6"/><rect x="1.3" y="18.6" width="5.7" height="5.7" stroke-width="2.6"/><rect x="18.6" y="18.6" width="6.1" height="5.7" stroke-width="2.6"/></g><g fill="#2b2f36"><rect x="5.7" y="5.5" width="4" height="3.6"/><rect x="17.3" y="11.7" width="2.4" height="2.2"/><rect x="21.7" y="11.7" width="4.3" height="2.2"/><rect x="12" y="17.3" width="2.2" height="2.2"/><rect x="12" y="22" width="2.2" height="3.6"/></g></svg>
<svg class="r" style="left:1734.3px;top:648.15px" width="48" height="48" viewBox="-24 -24 48 48" fill="none"><g transform="translate(0,0) rotate(-49.6) scale(1.0)" stroke="#2b2f36" stroke-width="3.25" stroke-linecap="round" fill="none"><path d="M 4.4 4.6 L 10.1 4.6 A 4.6 4.6 0 0 0 10.1 -4.6 L 1.8 -4.6 A 4.6 4.6 0 0 0 -0.5 3.98"/><path d="M 4.4 4.6 L 10.1 4.6 A 4.6 4.6 0 0 0 10.1 -4.6 L 1.8 -4.6 A 4.6 4.6 0 0 0 -0.5 3.98" transform="rotate(180)"/></g></svg>
<svg class="r" style="left:1806px;top:640px" width="64" height="64" viewBox="-32 -32 64 64" fill="none"><g transform="translate(0.6,0.15) rotate(-49.6) scale(1.0)" stroke="#2b2f36" stroke-width="3.25" stroke-linecap="round" fill="none"><path d="M 4.4 4.6 L 10.1 4.6 A 4.6 4.6 0 0 0 10.1 -4.6 L 1.8 -4.6 A 4.6 4.6 0 0 0 -0.5 3.98"/><path d="M 4.4 4.6 L 10.1 4.6 A 4.6 4.6 0 0 0 10.1 -4.6 L 1.8 -4.6 A 4.6 4.6 0 0 0 -0.5 3.98" transform="rotate(180)"/></g><g stroke="#f5f6f7" stroke-width="3"><rect x="2.6" y="4.7" width="13.8" height="9.4" rx="1" fill="#f5f6f7"/><path d="M6.9 5.5 V2.95 a2.85 2.85 0 0 1 5.7 0 V5.5" stroke-width="6"/></g><rect x="2.6" y="4.7" width="13.8" height="9.4" rx="1" fill="#2b2f36"/><path d="M6.9 5.5 V2.95 a2.85 2.85 0 0 1 5.7 0 V5.5" stroke="#2b2f36" stroke-width="2.8"/></svg>
<svg class="r" style="left:2162px;top:656px;" width="32" height="32" viewBox="0 0 32 32" fill="none"><path d="M13.2 3.2 h5.6 l1.1 3.6 2.5 1.45 3.65-.85 2.8 4.85-2.55 2.75 v2.9 l2.55 2.75-2.8 4.85-3.65-.85-2.5 1.45-1.1 3.6 h-5.6 l-1.1-3.6-2.5-1.45-3.65.85-2.8-4.85 2.55-2.75 v-2.9 L3.15 12.25l2.8-4.85 3.65.85 2.5-1.45z" stroke="#1f2329" stroke-width="2.6" stroke-linejoin="round" fill="none"/><circle cx="16" cy="16" r="4.6" stroke="#1f2329" stroke-width="2.6"/></svg>
<div class="t" style="left:2198.2px;top:653.0px;line-height:42px;height:42px;font-size:28px;color:#1f2329;">设置</div>
</body></html>
